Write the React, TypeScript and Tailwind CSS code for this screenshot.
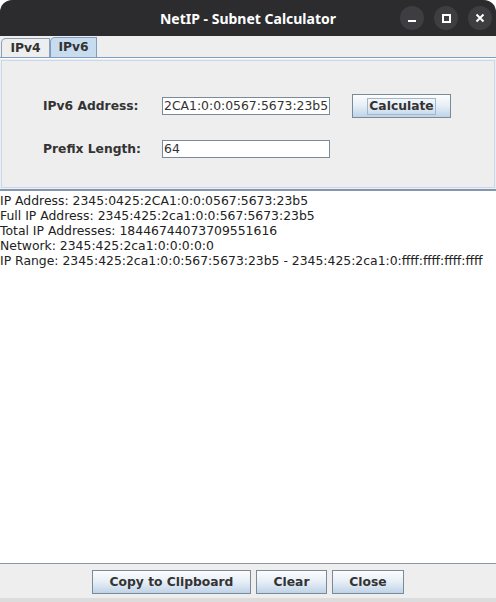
import React from "react";

const btn =
  "h-[24px] border border-[#7a8a99] bg-gradient-to-b from-[#fcfdfe] via-[#e6eef6] to-[#bfd3e8] text-[12.3px] font-bold text-[#333333] flex items-center justify-center";

export default function App() {
  const lines = [
    "IP Address: 2345:0425:2CA1:0:0:0567:5673:23b5",
    "Full IP Address: 2345:425:2ca1:0:0:567:5673:23b5",
    "Total IP Addresses: 18446744073709551616",
    "Network: 2345:425:2ca1:0:0:0:0:0",
    "IP Range: 2345:425:2ca1:0:0:567:5673:23b5 - 2345:425:2ca1:0:ffff:ffff:ffff:ffff",
  ];
  return (
    <div className="w-[496px] h-[602px] bg-white flex flex-col font-['DejaVu_Sans',sans-serif] overflow-hidden">
      {/* title bar */}
      <div className="relative h-[36px] flex-none bg-[#2c2c2f] rounded-t-[12px] flex items-center justify-center">
        <span className="text-white font-bold text-[14px] font-['Noto_Sans',sans-serif]">
          NetIP - Subnet Calculator
        </span>
        <div className="absolute right-[4px] top-[6px] flex gap-[10px]">
          <div className="w-[24px] h-[24px] rounded-full bg-[#3e3e42] flex items-center justify-center">
            <div className="w-[8px] h-[2px] bg-white mt-[6px]" />
          </div>
          <div className="w-[24px] h-[24px] rounded-full bg-[#3e3e42] flex items-center justify-center">
            <div className="w-[9px] h-[9px] border-2 border-white" />
          </div>
          <div className="w-[24px] h-[24px] rounded-full bg-[#3e3e42] flex items-center justify-center">
            <svg width="10" height="10" viewBox="0 0 10 10">
              <path d="M1.5 1.5 L8.5 8.5 M8.5 1.5 L1.5 8.5" stroke="white" strokeWidth="2" />
            </svg>
          </div>
        </div>
      </div>

      {/* tabbed pane */}
      <div className="flex-none bg-[#eeeeee] flex flex-col">
        <div className="h-[22px] flex items-end pl-[1px] border-b border-[#7f9bbf]">
          <div className="h-[19px] w-[49px] border border-b-0 border-[#8aa0b8] rounded-tl-[5px] bg-[#eeeeee] flex items-center justify-center text-[12.3px] font-bold text-[#333333]">
            IPv4
          </div>
          <div className="h-[20px] w-[47px] border border-b-0 border-[#7f9bbf] rounded-tl-[5px] bg-[#c8dcf0] flex items-center justify-center text-[12.3px] font-bold text-[#333333]">
            IPv6
          </div>
        </div>
        <div className="h-[133px] border-t border-white border-b-2 border-b-[#8597b0] px-[1px] pt-[1px] pb-[1px]">
          <div className="h-full border border-[#c6d9ee] pl-[41px] pt-[33px]">
            <div className="flex items-center h-[24px]">
              <div className="w-[119px] text-[12.3px] font-bold text-[#333333]">IPv6 Address:</div>
              <div className="w-[168px] h-[18px] bg-white border border-[#7a8a99] text-[12.4px] text-[#333333] pl-[1px] leading-[16px] overflow-hidden whitespace-nowrap">
                2CA1:0:0:0567:5673:23b5
              </div>
              <div className={btn + " ml-[22px] w-[99px]"}>
                <span className="border border-[#a3b7cc] px-[1px] leading-[15px]">Calculate</span>
              </div>
            </div>
            <div className="flex items-center h-[18px] mt-[22px]">
              <div className="w-[119px] text-[12.3px] font-bold text-[#333333]">Prefix Length:</div>
              <div className="w-[168px] h-[18px] bg-white border border-[#7a8a99] text-[12.4px] text-[#333333] pl-[1px] leading-[16px]">
                64
              </div>
            </div>
          </div>
        </div>
      </div>

      {/* text area */}
      <div className="flex-1 bg-white text-[12.4px] leading-[15px] text-[#222222] pt-[2px] whitespace-nowrap">
        {lines.map((l) => (
          <div key={l}>{l}</div>
        ))}
      </div>

      {/* bottom bar */}
      <div className="h-[39px] flex-none bg-[#eeeeee] border-t border-[#8c98a6] border-b-[4px] border-b-[#dcdcdc] flex justify-center gap-[5px] pt-[6px]">
        <div className={btn + " w-[159px]"}>Copy to Clipboard</div>
        <div className={btn + " w-[71px]"}>Clear</div>
        <div className={btn + " w-[72px]"}>Close</div>
      </div>
    </div>
  );
}
